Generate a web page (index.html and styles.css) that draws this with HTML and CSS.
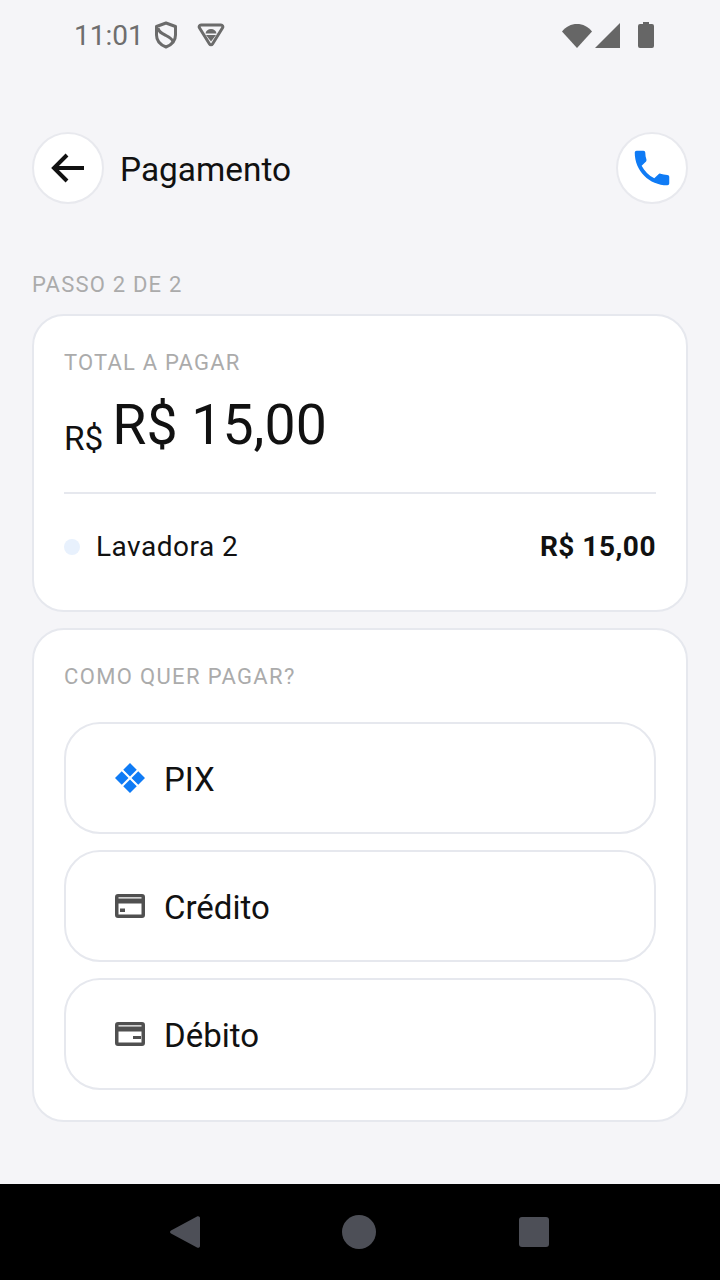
FILE: index.html
```html
<!DOCTYPE html>
<html lang="pt-BR">
<head>
    <meta charset="UTF-8">
    <meta name="viewport" content="width=device-width, initial-scale=1.0">
    <title>Pagamento</title>
    <link rel="stylesheet" href="styles.css">
</head>
<body>
    <div class="status-bar">
        <div class="status-left">
            <span class="clock">11:01</span>
            <svg class="status-shield" viewBox="0 0 24 28">
                <path d="M12 2 21.500 5.500v8.500c0 5.600-3.900 9.900-9.500 12C6.400 23.900 2.500 19.600 2.500 14V5.500z" fill="none" stroke="#6b6b6b" stroke-width="3" stroke-linejoin="round"/>
                <path d="M4 7c.5 4 4 5.500 8 7.500s6.500 3.500 7 6.500" fill="none" stroke="#6b6b6b" stroke-width="3"/>
            </svg>
            <svg class="status-vpn" viewBox="0 0 28 26">
                <path d="M4 3h20c1.500 0 2.400 1.500 1.600 2.800L15.500 22c-.7 1.100-2.300 1.100-3 0L2.400 5.800C1.600 4.500 2.500 3 4 3z" fill="none" stroke="#6b6b6b" stroke-width="3" stroke-linejoin="round"/>
                <path d="M8.500 11.500c.4-3 2.700-4.500 5.500-4.500s5.100 1.500 5.500 4.500z" fill="#6b6b6b"/>
                <path d="M9 13h10l-5 6.500z" fill="#6b6b6b"/>
            </svg>
        </div>
        <div class="status-right">
            <svg class="status-wifi" viewBox="0 0 30 25"><path d="M0 8.500C4 3.500 9 1 15 1s11 2.500 15 7.500L15 25z" fill="#666"/></svg>
            <svg class="status-signal" viewBox="0 0 25 25"><path d="M25 0v25H0z" fill="#666"/></svg>
            <svg class="status-battery" viewBox="0 0 16 26"><path d="M5 0h6v2h3a2 2 0 0 1 2 2v20a2 2 0 0 1-2 2H2a2 2 0 0 1-2-2V4a2 2 0 0 1 2-2h3z" fill="#666"/></svg>
        </div>
    </div>

    <main class="content">
        <header class="top-bar">
            <div class="top-left">
                <button class="round-btn">
                    <svg width="48" height="48" viewBox="0 0 24 24"><path d="M20 12H5M11.500 5.500 5 12l6.500 6.500" fill="none" stroke="#111" stroke-width="2"/></svg>
                </button>
                <h1 class="page-title">Pagamento</h1>
            </div>
            <button class="round-btn">
                <svg width="46" height="46" viewBox="0 0 24 24"><path d="M6.600 10.800c1.400 2.800 3.800 5.100 6.600 6.600l2.200-2.200c.3-.3.700-.4 1-.2 1.100.4 2.300.6 3.600.6.600 0 1 .4 1 1V20c0 .6-.4 1-1 1C10.600 21 3 13.400 3 4c0-.6.400-1 1-1h3.500c.6 0 1 .4 1 1 0 1.300.2 2.500.6 3.600.1.300 0 .7-.2 1z" fill="#0f7bf5"/></svg>
            </button>
        </header>

        <p class="step-label">PASSO 2 DE 2</p>

        <section class="card total-card">
            <p class="card-label">TOTAL A PAGAR</p>
            <div class="amount"><span class="amount-small">R$</span><span class="amount-big">R$ 15,00</span></div>
            <div class="item-row">
                <div class="item-name"><span class="dot"></span>Lavadora 2</div>
                <strong class="item-price">R$ 15,00</strong>
            </div>
        </section>

        <section class="card pay-card">
            <p class="card-label">COMO QUER PAGAR?</p>
            <div class="options">
                <button class="option">
                    <svg class="option-icon" viewBox="0 0 30 30">
                        <path d="M15 0l6.750 6.750L15 13.500 8.250 6.750zM15 16.500l6.750 6.750L15 30l-6.750-6.750zM6.750 8.250 13.500 15l-6.750 6.750L0 15zM23.250 8.250 30 15l-6.750 6.750L16.500 15z" fill="#0f7bf5"/>
                    </svg>
                    <span class="option-text">PIX</span>
                </button>
                <button class="option">
                    <svg class="option-icon" viewBox="0 0 30 24">
                        <path fill-rule="evenodd" d="M3 0h24a3 3 0 0 1 3 3v18a3 3 0 0 1-3 3H3a3 3 0 0 1-3-3V3a3 3 0 0 1 3-3zM3.500 3.200v1.300h23V3.200zM3.500 9.500v11h23v-11z" fill="#505050"/>
                        <path d="M5 14.500h5V18H5z" fill="#505050"/>
                    </svg>
                    <span class="option-text">Crédito</span>
                </button>
                <button class="option">
                    <svg class="option-icon" viewBox="0 0 30 24">
                        <path fill-rule="evenodd" d="M3 0h24a3 3 0 0 1 3 3v18a3 3 0 0 1-3 3H3a3 3 0 0 1-3-3V3a3 3 0 0 1 3-3zM3.500 3.200v1.300h23V3.200zM3.500 9.500v11h23v-11z" fill="#505050"/>
                        <path d="M18 14h8v3h-8z" fill="#505050"/>
                    </svg>
                    <span class="option-text">Débito</span>
                </button>
            </div>
        </section>
    </main>

    <nav class="nav-bar">
        <svg class="nav-back" viewBox="0 0 30 34"><path d="M27 1.500c1.500-.9 3 .1 3 1.500v28c0 1.400-1.500 2.400-3 1.500L1 18.500c-1.300-.8-1.300-2.200 0-3z" fill="#4d4f57"/></svg>
        <span class="nav-home"></span>
        <span class="nav-recent"></span>
    </nav>
</body>
</html>
```

FILE: styles.css
```css
* {
    box-sizing: border-box;
}

body {
    margin: 0;
    width: 720px;
    height: 1280px;
    display: flex;
    flex-direction: column;
    background: #f5f5f8;
    font-family: Roboto, "Liberation Sans", sans-serif;
    color: #111;
    overflow: hidden;
}

p, h1 {
    margin: 0;
}

.status-bar {
    height: 70px;
    flex-shrink: 0;
    display: flex;
    justify-content: space-between;
    align-items: center;
    padding: 0 66px 0 74px;
}

.status-left, .status-right {
    display: flex;
    align-items: center;
}

.clock {
    font-size: 28px;
    color: #6e6e6e;
}

.status-shield {
    width: 24px;
    height: 30px;
    margin-left: 10px;
}

.status-vpn {
    width: 28px;
    height: 26px;
    margin-left: 19px;
}

.status-wifi {
    width: 30px;
    height: 25px;
}

.status-signal {
    width: 25px;
    height: 25px;
    margin-left: 3px;
}

.status-battery {
    width: 16px;
    height: 26px;
    margin-left: 18px;
}

.content {
    flex: 1;
    padding: 62px 32px 0;
}

.top-bar {
    display: flex;
    justify-content: space-between;
    align-items: center;
}

.top-left {
    display: flex;
    align-items: center;
    gap: 16px;
}

.round-btn {
    width: 72px;
    height: 72px;
    padding: 0;
    display: flex;
    justify-content: center;
    align-items: center;
    background: #fff;
    border: 2px solid #e8e9ee;
    border-radius: 50%;
}

.page-title {
    font-size: 33.4px;
    font-weight: 400;
    position: relative;
    top: 1px;
}

.step-label {
    margin-top: 68px;
    font-size: 22px;
    line-height: 26px;
    letter-spacing: 1.2px;
    color: #ababab;
}

.card {
    background: #fff;
    border: 2px solid #e6e8ee;
    border-radius: 32px;
    padding: 0 30px;
}

.total-card {
    height: 298px;
    margin-top: 16px;
    padding-top: 34px;
}

.card-label {
    font-size: 22px;
    line-height: 26px;
    letter-spacing: 1.2px;
    color: #ababab;
}

.pay-card .card-label {
    letter-spacing: 1.35px;
}

.amount {
    margin-top: 17px;
    height: 69px;
    display: flex;
    align-items: baseline;
    gap: 9px;
}

.amount-small {
    font-size: 33.4px;
    position: relative;
    top: 6px;
}

.amount-big {
    font-size: 55.4px;
    line-height: 66px;
}

.item-row {
    margin-top: 30px;
    padding-top: 35px;
    border-top: 2px solid #e6e8ee;
    display: flex;
    justify-content: space-between;
    align-items: center;
    font-size: 28px;
    line-height: 36px;
}

.item-name {
    display: flex;
    align-items: center;
    gap: 16px;
    letter-spacing: 0.5px;
}

.dot {
    width: 16px;
    height: 16px;
    border-radius: 50%;
    background: #e8f1fd;
}

.item-price {
    letter-spacing: 0.5px;
}

.pay-card {
    height: 494px;
    margin-top: 16px;
    padding-top: 34px;
}

.options {
    margin-top: 32px;
    display: flex;
    flex-direction: column;
    gap: 16px;
}

.option {
    height: 112px;
    display: flex;
    align-items: center;
    gap: 19px;
    padding: 0 49px;
    background: #fff;
    border: 2px solid #e6e8ee;
    border-radius: 36px;
    font-family: inherit;
    font-size: 33px;
    color: #111;
}

.option-icon {
    width: 30px;
    height: 30px;
}

.option-text {
    padding-top: 3px;
}

.nav-bar {
    height: 96px;
    flex-shrink: 0;
    background: #000;
    position: relative;
}

.nav-back {
    position: absolute;
    left: 170px;
    top: 31px;
    width: 30px;
    height: 34px;
}

.nav-home {
    position: absolute;
    left: 342px;
    top: 31px;
    width: 34px;
    height: 34px;
    border-radius: 50%;
    background: #4d4f57;
}

.nav-recent {
    position: absolute;
    left: 519px;
    top: 33px;
    width: 30px;
    height: 30px;
    border-radius: 3px;
    background: #4d4f57;
}
```
